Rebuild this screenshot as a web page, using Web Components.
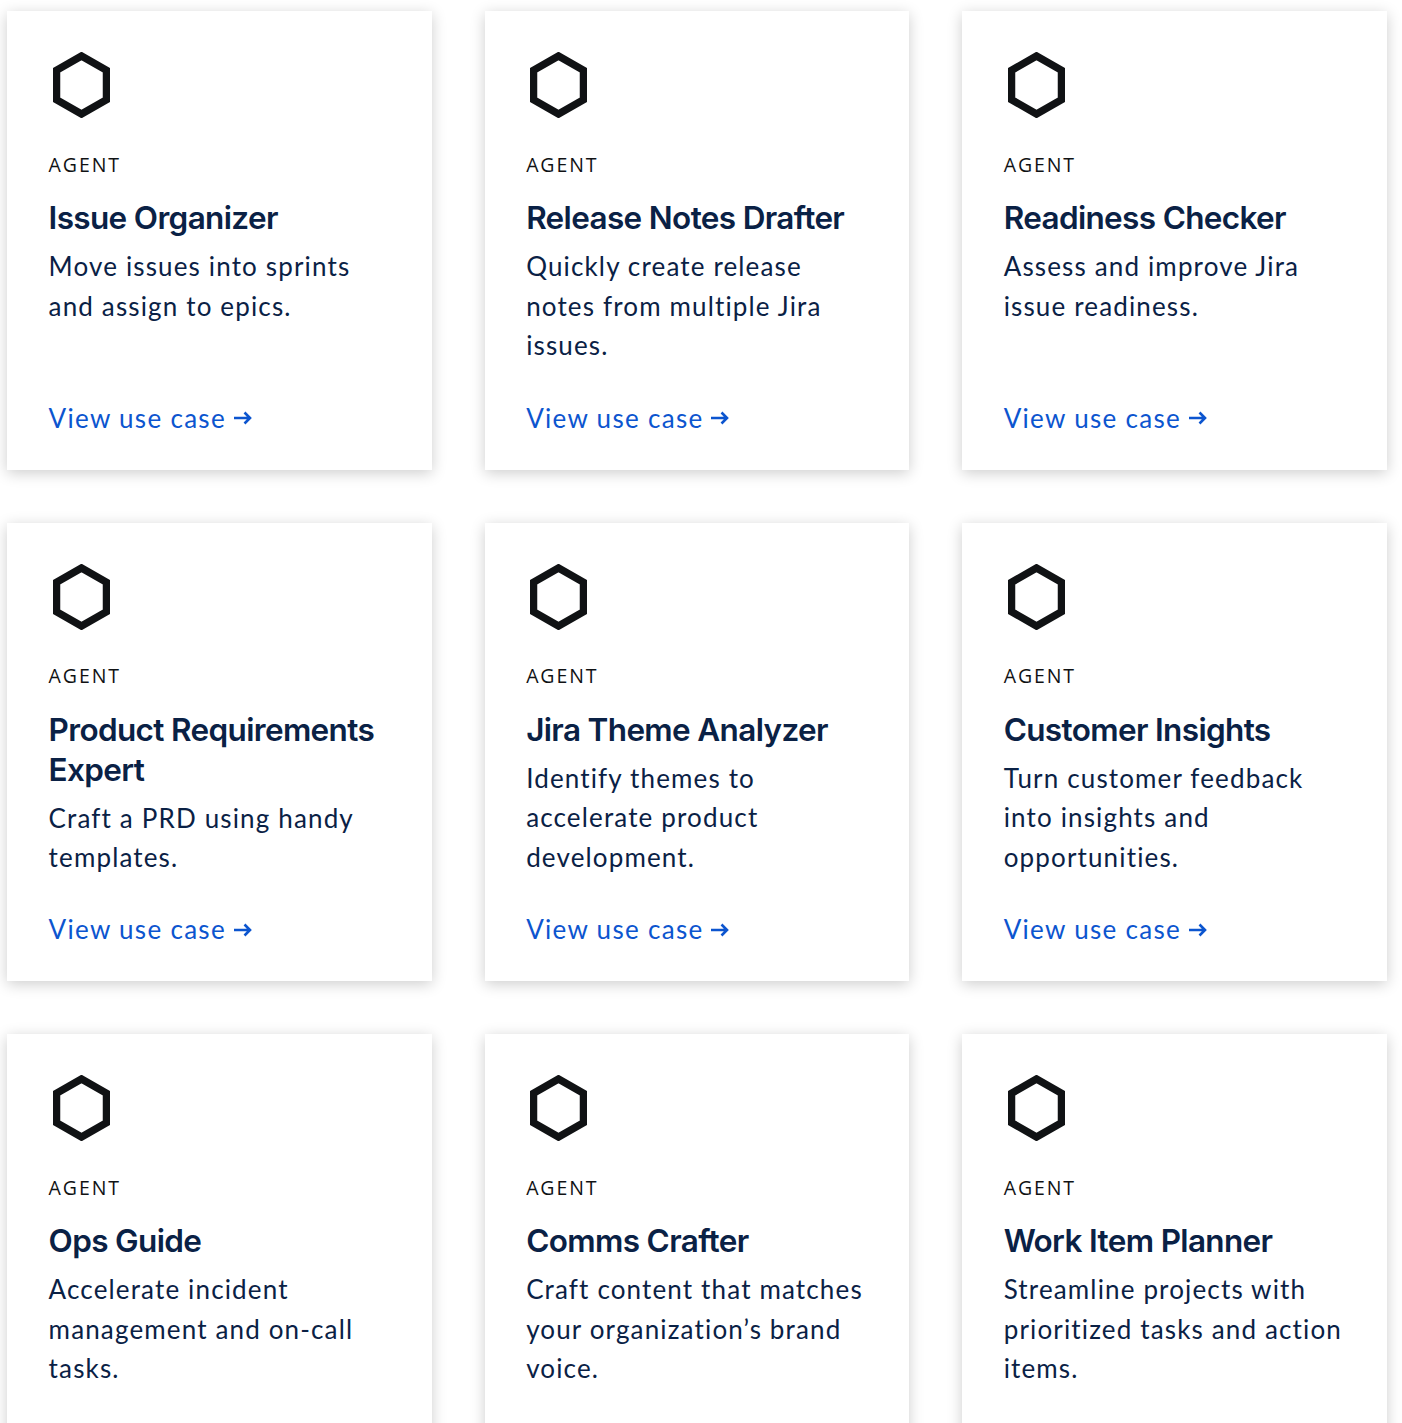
<!DOCTYPE html>
<html>
<head>
<meta charset="utf-8">
<style>
  html, body { margin: 0; background: #fff; height: 1423px; overflow: hidden; }
  body { font-family: "Lato", "Liberation Sans", sans-serif; }
</style>
</head>
<body>
<agent-grid>
  <agent-card name="Issue Organizer">Move issues into sprints<br>and assign to epics.</agent-card>
  <agent-card name="Release Notes Drafter">Quickly create release<br>notes from multiple Jira<br>issues.</agent-card>
  <agent-card name="Readiness Checker">Assess and improve Jira<br>issue readiness.</agent-card>
  <agent-card name="Product Requirements Expert">Craft a PRD using handy<br>templates.</agent-card>
  <agent-card name="Jira Theme Analyzer">Identify themes to<br>accelerate product<br>development.</agent-card>
  <agent-card name="Customer Insights">Turn customer feedback<br>into insights and<br>opportunities.</agent-card>
  <agent-card name="Ops Guide">Accelerate incident<br>management and on-call<br>tasks.</agent-card>
  <agent-card name="Comms Crafter">Craft content that matches<br>your organization’s brand<br>voice.</agent-card>
  <agent-card name="Work Item Planner">Streamline projects with<br>prioritized tasks and action<br>items.</agent-card>
</agent-grid>
<script>
class AgentGrid extends HTMLElement {
  constructor() {
    super();
    this.attachShadow({ mode: "open" });
    this.shadowRoot.innerHTML = `
      <style>
        :host {
          display: grid;
          grid-template-columns: repeat(3, 1fr);
          column-gap: 52.6px;
          row-gap: 53px;
          padding: 11px 15px 0 7px;
        }
      </style>
      <slot></slot>
    `;
  }
}

class AgentCard extends HTMLElement {
  constructor() {
    super();
    this.attachShadow({ mode: "open" });
    this.shadowRoot.innerHTML = `
      <style>
        :host {
          display: flex;
          flex-direction: column;
          box-sizing: border-box;
          height: 458.5px;
          padding: 41px 20px 0 41.6px;
          background: #fff;
          box-shadow: 0 3px 14px rgba(0, 0, 0, 0.2);
        }
        svg.hex { display: block; margin-left: 4px; }
        .label {
          margin-top: 34.9px;
          font: 400 19.5px/24px "Open Sans", sans-serif;
          letter-spacing: 1.9px;
          color: #101214;
        }
        h3 {
          margin: 21.3px 0 0;
          font: 600 31.5px/40px "Inter", sans-serif;
          letter-spacing: -0.65px;
          color: #0a2145;
        }
        p {
          margin: 8.9px 0 0;
          font: 400 26px/39.6px "Lato", sans-serif;
          letter-spacing: 1.15px;
          color: #0a2145;
        }
        .link { margin-top: auto; margin-bottom: 32px; height: 40px; }
        a {
          display: inline-flex;
          align-items: center;
          gap: 8px;
          font: 400 26px/40px "Lato", sans-serif;
          letter-spacing: 1.3px;
          color: #0c55cf;
          text-decoration: none;
          white-space: nowrap;
        }
        a svg { display: block; margin-top: 1px; }
      </style>
      <svg class="hex" width="57" height="66" viewBox="0 0 57 66"><path d="M28.5 4 L53.5 18.3 V47.7 L28.5 62 L3.5 47.7 V18.3 Z" fill="none" stroke="#101214" stroke-width="7.5"/></svg>
      <div class="label">AGENT</div>
      <h3>${this.getAttribute("name")}</h3>
      <p><slot></slot></p>
      <div class="link"><a href="#">View use case <svg width="18" height="14" viewBox="0 0 18 14"><path d="M0 7H16M10.5 1.5L16 7L10.5 12.5" fill="none" stroke="#0c55cf" stroke-width="2.6"/></svg></a></div>
    `;
  }
}

customElements.define("agent-grid", AgentGrid);
customElements.define("agent-card", AgentCard);
</script>
</body>
</html>
